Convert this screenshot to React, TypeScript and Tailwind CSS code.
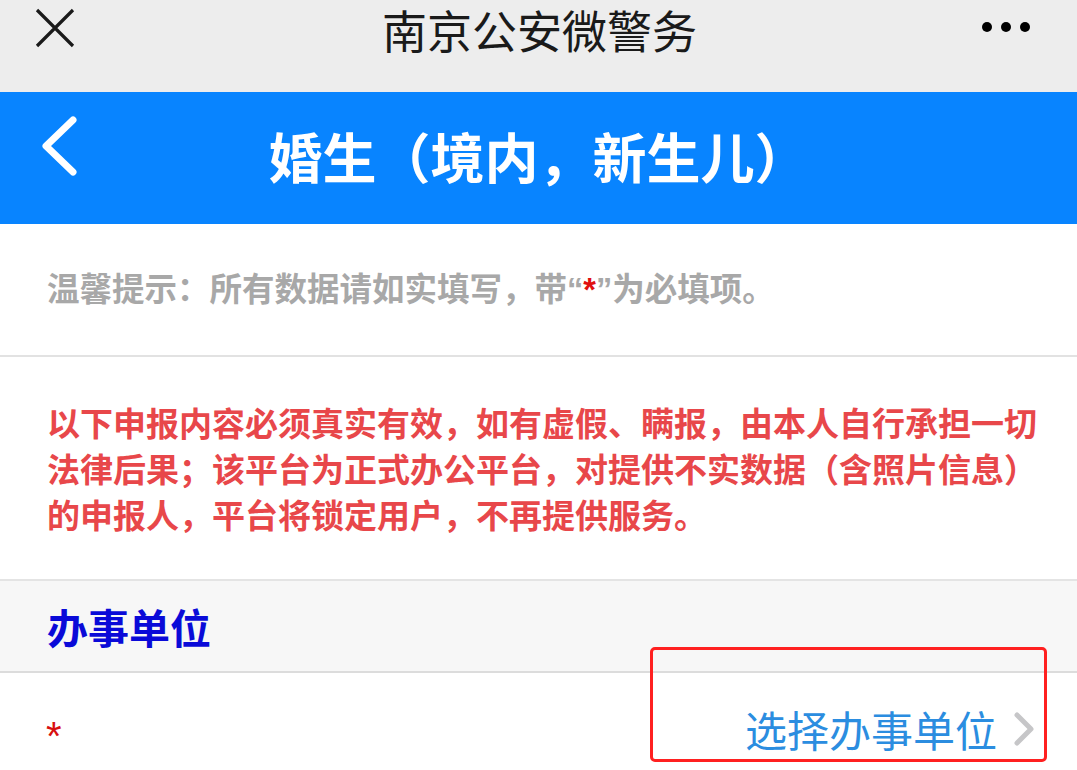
const cjk = { fontFamily: '"Noto Sans CJK SC", "Noto Sans", sans-serif' };
const latin = { fontFamily: '"Liberation Sans", sans-serif' };

const CloseIcon = () => (
  <svg width="40" height="40" viewBox="0 0 40 40" className="absolute left-[35px] top-[8px]">
    <path d="M2 2 L38 38 M38 2 L2 38" stroke="#1a1a1a" strokeWidth="3.2" />
  </svg>
);

const MoreIcon = () => (
  <div className="absolute right-[47px] top-[22px] flex gap-[9px]">
    <span className="w-[10px] h-[10px] rounded-full bg-black" />
    <span className="w-[10px] h-[10px] rounded-full bg-black" />
    <span className="w-[10px] h-[10px] rounded-full bg-black" />
  </div>
);

export default function App() {
  return (
    <div className="w-[1077px] h-[770px] overflow-hidden bg-white relative" style={cjk}>
      {/* wechat title bar */}
      <div className="relative h-[92px] bg-[#ededed] flex justify-center items-center pb-[32px]">
        <CloseIcon />
        <h1 className="text-[45px] leading-normal text-[#1a1a1a] pl-[2px]">南京公安微警务</h1>
        <MoreIcon />
      </div>

      {/* page header */}
      <div className="relative h-[132px] bg-[#0884ff] flex items-center justify-center">
        <svg width="44" height="66" viewBox="0 0 44 66" className="absolute left-[38px] top-[21px]">
          <path d="M35 7 L8 33 L35 59" fill="none" stroke="#fff" strokeWidth="7" strokeLinecap="round" strokeLinejoin="round" />
        </svg>
        <h2 className="text-[54px] font-bold text-white leading-none pb-[4px]">婚生（境内，新生儿）</h2>
      </div>

      {/* hint */}
      <div className="h-[133px] flex items-center px-[47px] border-b-2 border-[#e2e2e2]">
        <p className="text-[32.5px] font-bold text-[#a8a8a8] leading-none pb-[2px]">
          温馨提示：所有数据请如实填写，带<span style={latin}>“</span><span className="text-[#e01010]" style={latin}>*</span><span style={latin}>”</span>为必填项。
        </p>
      </div>

      {/* warning */}
      <div className="h-[224px] flex items-center pl-[47px] pr-[36px] border-b-2 border-[#e4e4e4]">
        <p className="text-[33px] font-bold text-[#e8474a] leading-[46px]">
          以下申报内容必须真实有效，如有虚假、瞒报，由本人自行承担一切法律后果；该平台为正式办公平台，对提供不实数据（含照片信息）的申报人，平台将锁定用户，不再提供服务。
        </p>
      </div>

      {/* section title */}
      <div className="h-[92px] bg-[#f7f7f7] flex items-center px-[47px] border-b-2 border-[#dcdcdc]">
        <h3 className="text-[41px] font-bold text-[#0a0ad8] leading-none">办事单位</h3>
      </div>

      {/* row */}
      <div className="h-[112px] flex items-center pl-[46px] pr-[42px]">
        <span className="text-[40px] text-[#d81010] leading-none pt-[14px]" style={latin}>*</span>
        <div className="ml-auto flex items-center gap-[16px]">
          <span className="text-[42px] text-[#2b8de0] leading-none">选择办事单位</span>
          <svg width="22" height="34" viewBox="0 0 22 34">
            <path d="M4 3 L18 17 L4 31" fill="none" stroke="#c6c6c8" strokeWidth="5" strokeLinecap="round" strokeLinejoin="round" />
          </svg>
        </div>
      </div>

      {/* annotation box */}
      <div className="absolute left-[650px] top-[647px] w-[397px] h-[115px] border-[3px] border-[#ff2020] rounded-[5px]" />
    </div>
  );
}
